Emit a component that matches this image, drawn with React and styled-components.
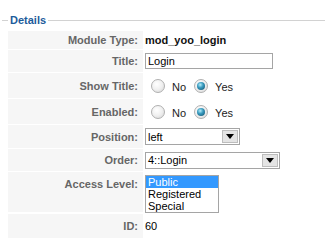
import React from "react";
import styled, { createGlobalStyle } from "styled-components";

const Global = createGlobalStyle`
  html, body { margin: 0; padding: 0; background: #fff; }
  body { font-family: "Liberation Sans", Arial, sans-serif; font-size: 11px; color: #333; }
`;

const Fieldset = styled.fieldset`
  margin: 14px 3px 0 2px;
  padding: 4px 0 0 6px;
  border: none;
  border-top: 1px solid #d2d2d2;
`;

const Legend = styled.legend`
  color: #1d5c9b;
  font-weight: bold;
  font-size: 11px;
  padding: 0 2px;
  margin-left: 0;
`;

const Table = styled.div`
  display: grid;
  grid-template-columns: 135px 1fr;
  column-gap: 2px;
  row-gap: 1px;
  margin-top: 1px;
`;

const Key = styled.div`
  background: #f6f6f6;
  color: #666;
  font-weight: bold;
  text-align: right;
  padding-right: 5px;
  height: ${(p) => p.h}px;
  display: flex;
  align-items: ${(p) => (p.top ? "flex-start" : "center")};
  justify-content: flex-end;
  padding-top: ${(p) => (p.top ? 6 : 0)}px;
  box-sizing: border-box;
`;

const Val = styled.div`
  display: flex;
  align-items: ${(p) => (p.top ? "flex-start" : "center")};
  padding-top: ${(p) => (p.top ? 3 : 0)}px;
  box-sizing: border-box;
  color: #000;
`;

const Strong = styled.span`
  font-weight: bold;
  color: #111;
`;

const TextInput = styled.div`
  width: 128px;
  height: 16px;
  border: 1px solid #a5a5a5;
  box-sizing: border-box;
  padding-left: 2px;
  line-height: 14px;
  color: #000;
`;

const RadioGroup = styled.div`
  display: flex;
  align-items: center;
  padding-left: 6px;
`;

const Radio = styled.span`
  width: 14px;
  height: 14px;
  border-radius: 50%;
  box-sizing: border-box;
  border: 1px solid #b0b0b0;
  background: radial-gradient(circle at 40% 35%, #ffffff 0%, #f0f0f0 50%, #d4d4d4 100%);
  display: inline-flex;
  align-items: center;
  justify-content: center;
  &::after {
    content: "";
    width: 8px;
    height: 8px;
    border-radius: 50%;
    background: ${(p) =>
      p.checked
        ? "radial-gradient(circle at 40% 35%, #b8eefa 0%, #3a9cc0 40%, #0d4a66 100%)"
        : "transparent"};
  }
`;

const RadioLabel = styled.span`
  margin: 3px ${(p) => p.after}px 0 7px;
  color: #222;
`;

const Select = styled.div`
  width: ${(p) => p.w}px;
  height: 17px;
  border: 1px solid #a5a5a5;
  box-sizing: border-box;
  display: flex;
  align-items: center;
  justify-content: space-between;
  padding-left: 2px;
  color: #000;
`;

const Arrow = styled.span`
  width: 16px;
  height: 13px;
  margin-right: 1px;
  background: #e4e4e4;
  border: 1px solid #bdbdbd;
  box-sizing: border-box;
  display: flex;
  align-items: center;
  justify-content: center;
  &::after {
    content: "";
    border-left: 4px solid transparent;
    border-right: 4px solid transparent;
    border-top: 5px solid #000;
  }
`;

const ListBox = styled.div`
  width: 74px;
  border: 1px solid #a5a5a5;
  box-sizing: border-box;
  color: #000;
`;

const Option = styled.div`
  height: 12px;
  line-height: 12px;
  padding-left: 2px;
  background: ${(p) => (p.selected ? "#3399ff" : "transparent")};
  color: ${(p) => (p.selected ? "#fff" : "#000")};
`;

const Row = ({ label, h, top, children }) => (
  <>
    <Key h={h} top={top}>{label}</Key>
    <Val top={top}>{children}</Val>
  </>
);

const YesNo = () => (
  <RadioGroup>
    <Radio />
    <RadioLabel after={8}>No</RadioLabel>
    <Radio checked />
    <RadioLabel after={0}>Yes</RadioLabel>
  </RadioGroup>
);

export default function App() {
  return (
    <>
      <Global />
      <Fieldset>
        <Legend>Details</Legend>
        <Table>
          <Row label="Module Type:" h={18}>
            <Strong>mod_yoo_login</Strong>
          </Row>
          <Row label="Title:" h={22}>
            <TextInput>Login</TextInput>
          </Row>
          <Row label="Show Title:" h={25}>
            <YesNo />
          </Row>
          <Row label="Enabled:" h={25}>
            <YesNo />
          </Row>
          <Row label="Position:" h={23}>
            <Select w={95}>
              left
              <Arrow />
            </Select>
          </Row>
          <Row label="Order:" h={22}>
            <Select w={135}>
              4::Login
              <Arrow />
            </Select>
          </Row>
          <Row label="Access Level:" h={40} top>
            <ListBox>
              <Option selected>Public</Option>
              <Option>Registered</Option>
              <Option>Special</Option>
            </ListBox>
          </Row>
          <Row label="ID:" h={24}>
            60
          </Row>
        </Table>
      </Fieldset>
    </>
  );
}
